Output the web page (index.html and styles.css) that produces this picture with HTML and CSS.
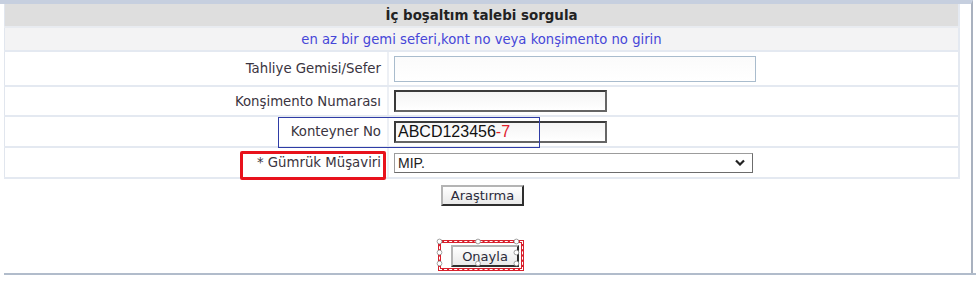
FILE: index.html
```html
<!DOCTYPE html>
<html lang="tr">
<head>
    <meta charset="UTF-8">
    <meta name="viewport" content="width=device-width, initial-scale=1.0">
    <title>İç boşaltım talebi sorgula</title>
    <link rel="stylesheet" href="styles.css">
</head>
<body>
    <div class="frame">
        <div class="panel">
            <table class="form">
                <tr class="title_row">
                    <td colspan="2">İç boşaltım talebi sorgula</td>
                </tr>
                <tr class="hint_row">
                    <td colspan="2">en az bir gemi seferi,kont no veya konşimento no girin</td>
                </tr>
                <tr class="row_tall">
                    <td class="label">Tahliye Gemisi/Sefer</td>
                    <td class="field"><input type="text" class="input_wide"></td>
                </tr>
                <tr>
                    <td class="label">Konşimento Numarası</td>
                    <td class="field"><input type="text" class="input_dark"></td>
                </tr>
                <tr class="row_mid">
                    <td class="label">Konteyner No</td>
                    <td class="field">
                        <div class="input_dark fake_input">ABCD123456<span class="check_digit">-7</span></div>
                    </td>
                </tr>
                <tr class="row_mid">
                    <td class="label">* Gümrük Müşaviri</td>
                    <td class="field">
                        <div class="select_box">
                            <span>MIP.</span>
                            <svg width="10" height="7" viewBox="0 0 10 7"><path d="M1 1.5 L5 5.5 L9 1.5" fill="none" stroke="#222" stroke-width="2.2"/></svg>
                        </div>
                    </td>
                </tr>
            </table>

            <!-- annotation boxes drawn over the form -->
            <div class="mark_blue"></div>
            <div class="mark_red"></div>

            <div class="actions">
                <button type="button" class="btn">Araştırma</button>
            </div>
            <div class="confirm">
                <span class="confirm_mark">
                    <button type="button" class="btn btn_confirm">Onayla</button>
                    <svg class="handles" width="100%" height="100%">
                        <circle cx="1.5" cy="1.5" r="2.4"/>
                        <circle cx="50%" cy="1.5" r="2.4"/>
                        <circle cx="98%" cy="1.5" r="2.4"/>
                        <circle cx="1.5" cy="50%" r="2.4"/>
                        <circle cx="98%" cy="50%" r="2.4"/>
                        <circle cx="1.5" cy="94%" r="2.4"/>
                        <circle cx="50%" cy="94%" r="2.4"/>
                        <circle cx="98%" cy="94%" r="2.4"/>
                    </svg>
                </span>
            </div>
        </div>
    </div>
    <div class="bottom_rule"></div>
</body>
</html>
```
FILE: styles.css
```css
body {
    font-family: "DejaVu Sans", Verdana, sans-serif;
    margin: 0;
    padding: 0;
    background-color: #ffffff;
    color: #333333;
}
.frame {
    width: 971px;
    height: 269px;
    border-top: 4px solid #c6cfdf;
    border-right: 2px solid #a9b1bf;
}
.panel {
    position: relative;
    margin-left: 4px;
    width: 956px;
}
.form {
    width: 100%;
    border-collapse: collapse;
    border-left: 1px solid #e1e6ee;
    border-right: 2px solid #e4e9f1;
}
.form td {
    padding: 0;
    border-bottom: 2px solid #e4e9f1;
    font-size: 13.3px;
}
.title_row td {
    height: 22px;
    background: #dedede;
    text-align: center;
    font-weight: bold;
    font-size: 13.4px;
    color: #222222;
    border-bottom: 2px solid #e8ebf0;
}
.hint_row td {
    height: 22px;
    background: #f3f3f4;
    text-align: center;
    color: #4646d8;
    font-size: 13.2px;
}
.form tr td.label {
    width: 376px;
    height: 28px;
    text-align: right;
    padding-right: 6px;
    border-right: 2px solid #edf0f5;
    color: #3a3440;
}
.form tr.row_tall td.label {
    height: 33px;
}
.form tr.row_mid td.label {
    height: 29px;
}
.field {
    padding-left: 5px !important;
}
.input_wide {
    display: block;
    box-sizing: border-box;
    width: 362px;
    height: 26px;
    margin: 0;
    border: 1px solid #a9bccd;
    background: linear-gradient(#fbfbfb, #ffffff);
}
.input_dark {
    display: block;
    box-sizing: border-box;
    width: 213px;
    height: 22px;
    margin: 0;
    border: 2px solid #3a3a3a;
    border-right-color: #666666;
    border-bottom-color: #666666;
    background: linear-gradient(#f4f4f4, #ffffff);
}
.fake_input {
    font-family: "Liberation Sans", Arial, sans-serif;
    font-size: 16px;
    line-height: 18px;
    padding-left: 2px;
    color: #111111;
}
.check_digit {
    color: #e0202a;
}
.select_box {
    box-sizing: border-box;
    width: 359px;
    height: 20px;
    border: 1px solid #9c9c9c;
    border-right-color: #6c6c6c;
    border-bottom-color: #6c6c6c;
    display: flex;
    align-items: center;
    justify-content: space-between;
    padding: 0 7px 0 3px;
    font-family: "Liberation Sans", Arial, sans-serif;
    font-size: 14px;
    color: #222222;
}
.mark_blue {
    position: absolute;
    left: 274px;
    top: 113px;
    width: 260px;
    height: 29px;
    border: 1px solid #2f3ca6;
}
.mark_red {
    position: absolute;
    left: 236px;
    top: 147px;
    width: 140px;
    height: 23px;
    border: 3px solid #e8121c;
    border-radius: 2px;
}
.actions {
    text-align: center;
    margin-top: 6px;
}
.btn {
    font-family: "DejaVu Sans", Verdana, sans-serif;
    font-size: 13px;
    color: #2a2a3a;
    background: linear-gradient(#ffffff, #e9e9e9);
    border: 2px solid;
    border-color: #b4b4b4 #2e2e2e #2e2e2e #b4b4b4;
    padding: 0;
    margin: 0;
    width: 83px;
    height: 21px;
    margin-left: 1px;
}
.confirm {
    text-align: center;
    margin-top: 34px;
}
.confirm_mark {
    position: relative;
    display: inline-block;
    border: 3px solid #d8202c;
    outline: 1px dashed #ffffff;
    outline-offset: -2px;
    padding: 2px 2px 1px 10px;
    margin-left: -2px;
    line-height: 0;
}
.btn_confirm {
    width: 68px;
    height: 22px;
    margin: 0;
}
.handles {
    position: absolute;
    left: -3px;
    top: -3px;
    overflow: visible;
}
.handles circle {
    fill: #ffffff;
    stroke: #8a8a8a;
    stroke-width: 0.8;
}
.bottom_rule {
    margin-left: 4px;
    height: 2px;
    background: #b1bccb;
}
```
